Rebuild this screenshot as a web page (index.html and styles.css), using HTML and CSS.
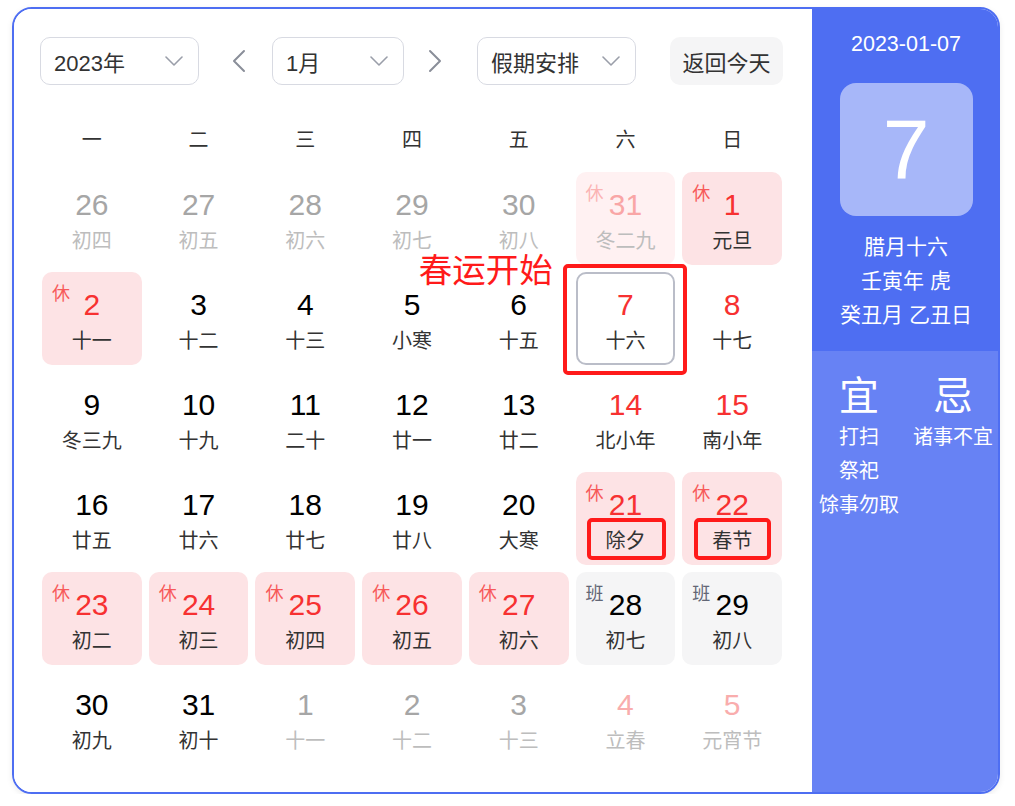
FILE: index.html
```html
<!DOCTYPE html>
<html lang="zh-CN">
<head>
<meta charset="utf-8">
<title>万年历</title>
<link rel="stylesheet" href="styles.css">
</head>
<body>
<div class="calendar">
  <div class="main">
    <div class="toolbar">
      <div class="select select-year"><span>2023年</span>
        <svg class="chev" width="18" height="10" viewBox="0 0 18 10"><polyline points="1,1 9,9 17,1"/></svg></div>
      <svg class="arrow arrow-prev" width="14" height="24" viewBox="0 0 14 24"><polyline points="12,2 2,12 12,22"/></svg>
      <div class="select select-month"><span>1月</span>
        <svg class="chev" width="18" height="10" viewBox="0 0 18 10"><polyline points="1,1 9,9 17,1"/></svg></div>
      <svg class="arrow arrow-next" width="14" height="24" viewBox="0 0 14 24"><polyline points="2,2 12,12 2,22"/></svg>
      <div class="select select-holiday"><span>假期安排</span>
        <svg class="chev" width="18" height="10" viewBox="0 0 18 10"><polyline points="1,1 9,9 17,1"/></svg></div>
      <div class="btn">返回今天</div>
    </div>

    <div class="weekdays">
      <span>一</span><span>二</span><span>三</span><span>四</span><span>五</span><span>六</span><span>日</span>
    </div>

    <div class="grid">
      <div class="cell other"><div class="num">26</div><div class="lunar">初四</div></div>
      <div class="cell other"><div class="num">27</div><div class="lunar">初五</div></div>
      <div class="cell other"><div class="num">28</div><div class="lunar">初六</div></div>
      <div class="cell other"><div class="num">29</div><div class="lunar">初七</div></div>
      <div class="cell other"><div class="num">30</div><div class="lunar">初八</div></div>
      <div class="cell rest faded"><span class="tag">休</span><div class="num">31</div><div class="lunar">冬二九</div></div>
      <div class="cell rest"><span class="tag">休</span><div class="num">1</div><div class="lunar">元旦</div></div>

      <div class="cell rest"><span class="tag">休</span><div class="num">2</div><div class="lunar">十一</div></div>
      <div class="cell"><div class="num">3</div><div class="lunar">十二</div></div>
      <div class="cell"><div class="num">4</div><div class="lunar">十三</div></div>
      <div class="cell"><div class="num">5</div><div class="lunar">小寒</div></div>
      <div class="cell"><div class="num">6</div><div class="lunar">十五</div>
        <span class="note">春运开始</span></div>
      <div class="cell weekend selected"><div class="num">7</div><div class="lunar">十六</div>
        <span class="mark mark-today"></span></div>
      <div class="cell weekend"><div class="num">8</div><div class="lunar">十七</div></div>

      <div class="cell"><div class="num">9</div><div class="lunar">冬三九</div></div>
      <div class="cell"><div class="num">10</div><div class="lunar">十九</div></div>
      <div class="cell"><div class="num">11</div><div class="lunar">二十</div></div>
      <div class="cell"><div class="num">12</div><div class="lunar">廿一</div></div>
      <div class="cell"><div class="num">13</div><div class="lunar">廿二</div></div>
      <div class="cell weekend"><div class="num">14</div><div class="lunar">北小年</div></div>
      <div class="cell weekend"><div class="num">15</div><div class="lunar">南小年</div></div>

      <div class="cell"><div class="num">16</div><div class="lunar">廿五</div></div>
      <div class="cell"><div class="num">17</div><div class="lunar">廿六</div></div>
      <div class="cell"><div class="num">18</div><div class="lunar">廿七</div></div>
      <div class="cell"><div class="num">19</div><div class="lunar">廿八</div></div>
      <div class="cell"><div class="num">20</div><div class="lunar">大寒</div></div>
      <div class="cell rest"><span class="tag">休</span><div class="num">21</div><div class="lunar">除夕</div>
        <span class="mark mark-chuxi"></span></div>
      <div class="cell rest"><span class="tag">休</span><div class="num">22</div><div class="lunar">春节</div>
        <span class="mark mark-chunjie"></span></div>

      <div class="cell rest"><span class="tag">休</span><div class="num">23</div><div class="lunar">初二</div></div>
      <div class="cell rest"><span class="tag">休</span><div class="num">24</div><div class="lunar">初三</div></div>
      <div class="cell rest"><span class="tag">休</span><div class="num">25</div><div class="lunar">初四</div></div>
      <div class="cell rest"><span class="tag">休</span><div class="num">26</div><div class="lunar">初五</div></div>
      <div class="cell rest"><span class="tag">休</span><div class="num">27</div><div class="lunar">初六</div></div>
      <div class="cell work"><span class="tag">班</span><div class="num">28</div><div class="lunar">初七</div></div>
      <div class="cell work"><span class="tag">班</span><div class="num">29</div><div class="lunar">初八</div></div>

      <div class="cell"><div class="num">30</div><div class="lunar">初九</div></div>
      <div class="cell"><div class="num">31</div><div class="lunar">初十</div></div>
      <div class="cell other"><div class="num">1</div><div class="lunar">十一</div></div>
      <div class="cell other"><div class="num">2</div><div class="lunar">十二</div></div>
      <div class="cell other"><div class="num">3</div><div class="lunar">十三</div></div>
      <div class="cell other weekend"><div class="num">4</div><div class="lunar">立春</div></div>
      <div class="cell other weekend"><div class="num">5</div><div class="lunar">元宵节</div></div>
    </div>
  </div>

  <div class="side">
    <div class="today">
      <div class="date">2023-01-07</div>
      <div class="bigday">7</div>
      <div class="lunar-info">
        <div>腊月十六</div>
        <div>壬寅年 虎</div>
        <div>癸丑月 乙丑日</div>
      </div>
    </div>
    <div class="yiji">
      <div class="col">
        <div class="col-title">宜</div>
        <div class="col-item">打扫</div>
        <div class="col-item">祭祀</div>
        <div class="col-item">馀事勿取</div>
      </div>
      <div class="col">
        <div class="col-title">忌</div>
        <div class="col-item">诸事不宜</div>
      </div>
    </div>
  </div>
</div>
</body>
</html>
```

FILE: styles.css
```css
body {
  margin: 0;
  background: #fff;
  font-family: "Liberation Sans", "Noto Sans CJK SC", sans-serif;
}

.calendar {
  margin: 7px 0 0 12px;
  width: 988px;
  height: 787px;
  box-sizing: border-box;
  border: 2px solid #4e6ef2;
  border-radius: 20px;
  overflow: hidden;
  display: flex;
  box-shadow: 0 2px 6px rgba(0, 0, 0, 0.08);
}

.main {
  width: 798px;
  flex: none;
  box-sizing: border-box;
  padding: 28px 0 0 26px;
  background: #fff;
}

/* toolbar */
.toolbar {
  display: flex;
  align-items: center;
  height: 48px;
}

.select {
  box-sizing: border-box;
  height: 48px;
  border: 1px solid #d8dae2;
  border-radius: 10px;
  display: flex;
  align-items: center;
  justify-content: space-between;
  padding: 0 15px 0 13px;
  font-size: 22px;
  color: #333;
}

.select-year { width: 159px; }
.select-month { width: 132px; }
.select-holiday { width: 159px; }

.chev polyline {
  fill: none;
  stroke: #9a9ea9;
  stroke-width: 1.6;
  stroke-linecap: round;
  stroke-linejoin: round;
}

.arrow polyline {
  fill: none;
  stroke: #8a8e99;
  stroke-width: 2;
  stroke-linecap: round;
  stroke-linejoin: round;
}

.arrow-prev { margin: 0 26px 0 33px; }
.arrow-next { margin: 0 35px 0 24px; }

.btn {
  margin-left: 34px;
  width: 113px;
  height: 48px;
  border-radius: 10px;
  background: #f5f5f6;
  font-size: 22px;
  color: #333;
  display: flex;
  align-items: center;
  justify-content: center;
}

/* weekday header */
.weekdays {
  display: grid;
  grid-template-columns: repeat(7, 1fr);
  column-gap: 7px;
  width: 740px;
  margin: 40px 0 0 2px;
  font-size: 20px;
  line-height: 30px;
  text-align: center;
  color: #333;
}

/* day grid */
.grid {
  display: grid;
  grid-template-columns: repeat(7, 1fr);
  grid-auto-rows: 93px;
  gap: 7px;
  width: 740px;
  margin: 17px 0 0 2px;
}

.cell {
  position: relative;
  box-sizing: border-box;
  border-radius: 10px;
  padding-top: 16px;
  text-align: center;
}

.num {
  font-size: 30px;
  line-height: 34px;
  color: #000;
}

.lunar {
  margin-top: 7px;
  font-size: 20px;
  line-height: 24px;
  color: #333;
}

.tag {
  position: absolute;
  left: 10px;
  top: 11px;
  font-size: 18px;
  line-height: 22px;
}

.weekend .num { color: #f73131; }

.other .num { color: #a6a6a6; }
.other .lunar { color: #bdbdbd; }
.other.weekend .num { color: #f9adad; }

.rest { background: #fde3e5; }
.rest .num { color: #f73131; }
.rest .tag { color: #f75a5a; }

.rest.faded { background: #fff1f2; }
.rest.faded .num { color: #f9a6a6; }
.rest.faded .tag { color: #fbb4b4; }
.rest.faded .lunar { color: #bdbdbd; }

.work { background: #f5f5f6; }
.work .tag { color: #626675; }

.selected {
  border: 2px solid #babdc8;
  padding-top: 14px;
}

/* annotations drawn on top of the calendar */
.mark {
  position: absolute;
  box-sizing: border-box;
  border: 4px solid #ff1a1a;
  border-radius: 5px;
}

.mark-today {
  left: -15px;
  top: -10px;
  width: 124px;
  height: 111px;
}

.mark-chuxi {
  left: 11px;
  top: 46px;
  width: 79px;
  height: 42px;
}

.mark-chunjie {
  left: 12px;
  top: 46px;
  width: 77px;
  height: 42px;
}

.note {
  position: absolute;
  left: -50px;
  top: -21px;
  white-space: nowrap;
  font-size: 33.5px;
  line-height: 40px;
  color: #ff1a1a;
}

/* side panel */
.side {
  flex: 1;
  display: flex;
  flex-direction: column;
  color: #fff;
}

.today {
  background: #4e6ef2;
  padding: 20px 0 19px;
  text-align: center;
}

.date {
  font-size: 21.5px;
  line-height: 30px;
}

.bigday {
  width: 133px;
  height: 133px;
  margin: 24px auto 0;
  border-radius: 16px;
  background: rgba(255, 255, 255, 0.5);
  font-size: 84px;
  display: flex;
  align-items: center;
  justify-content: center;
}

.lunar-info {
  margin-top: 14px;
  font-size: 21px;
  line-height: 34px;
}

.yiji {
  flex: 1;
  background: #6782f4;
  display: flex;
  justify-content: center;
  padding-top: 21px;
}

.col {
  width: 94px;
  text-align: center;
}

.col-title {
  font-size: 40px;
  line-height: 48px;
}

.col-item {
  font-size: 20px;
  line-height: 34px;
  white-space: nowrap;
}
```
